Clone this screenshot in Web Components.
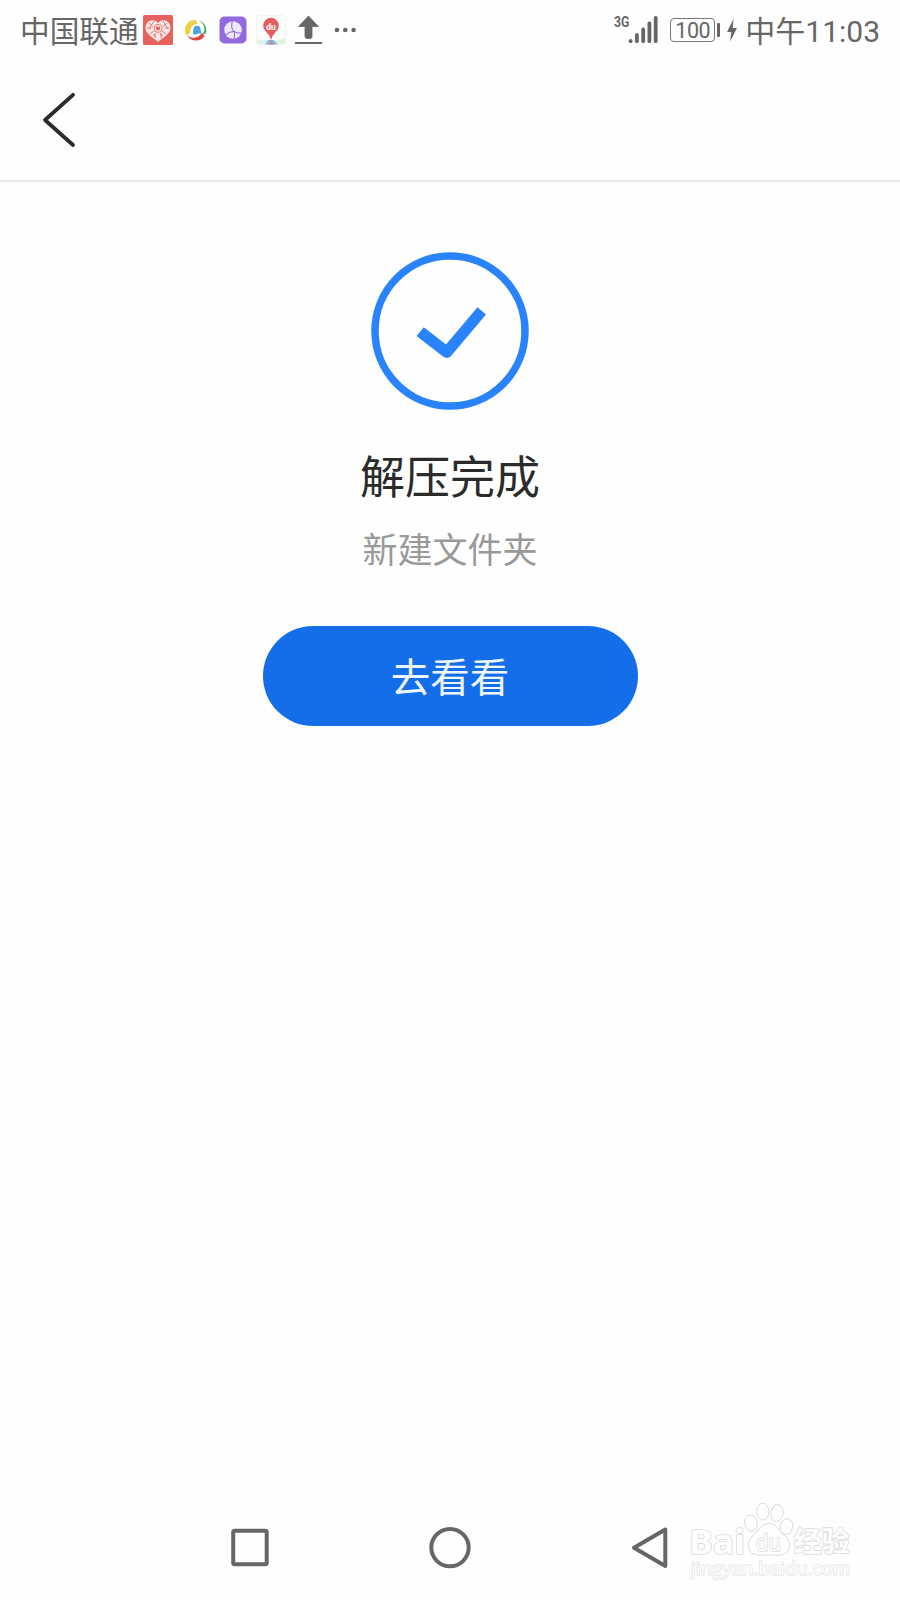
<!DOCTYPE html>
<html lang="zh-CN">
<head>
<meta charset="utf-8">
<title>解压完成</title>
<style>
	html, body {
		margin: 0;
		background: #fefefe;
	}
	body {
		font-family: Roboto, "Noto Sans CJK SC", sans-serif;
	}
</style>
</head>
<body>
<phone-screen>
	<status-bar slot="status" carrier="中国联通" network="3G" battery="100" time="中午11:03"></status-bar>
	<title-bar slot="header"></title-bar>
	<result-panel>
		<span slot="title">解压完成</span>
		<span slot="detail">新建文件夹</span>
		<pill-button slot="action">去看看</pill-button>
	</result-panel>
	<nav-bar slot="nav"></nav-bar>
	<site-mark slot="mark"></site-mark>
</phone-screen>

<script>
class PhoneScreen extends HTMLElement {
	constructor() {
		super();
		this.attachShadow({mode: 'open'}).innerHTML = `
		<style>
			:host {
				display: flex;
				flex-direction: column;
				position: relative;
				width: 900px;
				height: 1600px;
				overflow: hidden;
				background: #fefefe;
			}
			main {
				flex: 1;
			}
		</style>
		<slot name="status"></slot>
		<slot name="header"></slot>
		<main><slot></slot></main>
		<slot name="nav"></slot>
		<slot name="mark"></slot>
		`;
	}
}

class AppBadge extends HTMLElement {
	static icons = {
		heart: `
			<rect width="30" height="30" rx="1.5" fill="#e5625d"/>
			<path d="M15 8.2C12.5 3.2 2.5 4 2.5 13C2.5 19 10 22.5 15 26.8C20 22.5 27.5 19 27.5 13C27.5 4 17.5 3.2 15 8.2Z" fill="#fbe6e3"/>
			<g stroke="#e5625d" stroke-width=".8" fill="none">
				<path d="M6 8l4 4M11 6l-5 8M4 13h4M20 6l5 8M24 8l-4 4M22 13h4M7 19l4-3M12 18v5M18 18v5M23 19l-4-3M10 20h3M17 20h3"/>
				<circle cx="15" cy="13.4" r="4"/>
			</g>
			<path d="M13 11.8h4v2.2l-2 1.8l-2-1.8z" fill="#e5625d"/>`,
		browser: `
			<path d="M5.7 20.5A10 10 0 0 1 14.5 5L16.5 8.5A8 8 0 0 0 9.3 17.8Z" fill="#f1cf45"/>
			<path d="M14.5 5A10.3 10.3 0 0 1 24.8 18.5L21.5 19.5A9 9 0 0 0 14.5 5Z" fill="#3eae62"/>
			<path d="M5.7 19.8A10.3 10.3 0 0 0 23.5 21L21 17.8A9.5 9.5 0 0 1 5.7 19.8Z" fill="#dc4545"/>
			<path d="M12 18.8C11.8 16.6 12.4 16 12.5 14.3A3.5 3.5 0 0 1 19.5 14.3C19.5 16 20.8 17 20 18.2C19 19.4 17.4 18 16 19C14.7 19.8 13.2 19.8 12 18.8Z" fill="#4aa5dc"/>`,
		globe: `
			<rect x="1.5" y="1.5" width="27" height="27" rx="5" fill="#9269df"/>
			<circle cx="15" cy="15" r="8.8" fill="#efe7fb"/>
			<path d="M14.2 6.5Q12.5 14 16.2 16.5Q19 18.5 23 18M16.2 16.5Q12 16 7.8 20M16.2 16.5Q17 20 16 23.5" fill="none" stroke="#8661cf" stroke-width="1"/>`,
		pin: `
			<rect x=".5" y=".5" width="29" height="29" rx="3" fill="#fdfdfc" stroke="#f4f1ee"/>
			<path d="M1 24l8 2l-2 3H1zM20 26l9-3v6h-7z" fill="#e3f1df"/>
			<path d="M2 29l6-4l4 0l-3 4z" fill="#dceff8"/>
			<path d="M12 25h6l4 4.5H9z" fill="#7ebfe4"/>
			<path d="M15 25l4 4.5h-6z" fill="#d98286"/>
			<path d="M15 25Q13.8 20.5 9.7 16.3A7.8 7.8 0 1 1 20.3 16.3Q16.2 20.5 15 25Z" fill="#e85c60"/>
			<text x="15" y="14.5" text-anchor="middle" font-size="8.5" font-weight="700" fill="#fff">du</text>`
	};

	constructor() {
		super();
		this.attachShadow({mode: 'open'});
	}

	connectedCallback() {
		this.shadowRoot.innerHTML = `
		<style>
			:host, svg {
				display: block;
				width: 30px;
				height: 30px;
			}
		</style>
		<svg viewBox="0 0 30 30">${AppBadge.icons[this.getAttribute('icon')] || ''}</svg>
		`;
	}
}

class StatusBar extends HTMLElement {
	constructor() {
		super();
		this.attachShadow({mode: 'open'});
	}

	connectedCallback() {
		const carrier = this.getAttribute('carrier');
		const network = this.getAttribute('network');
		const battery = this.getAttribute('battery');
		const time = this.getAttribute('time');
		this.shadowRoot.innerHTML = `
		<style>
			:host {
				display: flex;
				justify-content: space-between;
				box-sizing: border-box;
				height: 60px;
				padding: 0 20px 0 20px;
				color: #666;
				white-space: nowrap;
			}
			.left, .right, .badges {
				display: flex;
				align-items: center;
				height: 60px;
			}
			.carrier, .time {
				padding-top: 3px;
				line-height: 60px;
			}
			.carrier {
				width: 123px;
				font-size: 29.7px;
			}
			.badges {
				gap: 7.6px;
			}
			svg {
				display: block;
			}
			.upload {
				margin-left: 7px;
			}
			.more {
				margin-left: 11.5px;
			}
			.network {
				align-self: flex-start;
				width: 14px;
				height: 44px;
				font: 700 15px/45px Roboto, sans-serif;
			}
			.network span {
				display: block;
				transform: scaleX(.82);
				transform-origin: left;
			}
			.battery {
				box-sizing: border-box;
				width: 45px;
				height: 24px;
				margin-left: 12.5px;
				border: 1.5px solid #777;
				border-radius: 4px;
				font-size: 21.5px;
				line-height: 23px;
				text-align: center;
				letter-spacing: -.4px;
			}
			.nub {
				width: 3px;
				height: 14px;
				margin-left: 2px;
				border-radius: 1px;
				background: #666;
			}
			.bolt {
				margin: 0 8px 0 7px;
			}
			.time {
				font-size: 30px;
			}
		</style>
		<div class="left">
			<span class="carrier">${carrier}</span>
			<div class="badges">
				<app-badge icon="heart"></app-badge>
				<app-badge icon="browser"></app-badge>
				<app-badge icon="globe"></app-badge>
				<app-badge icon="pin"></app-badge>
			</div>
			<svg class="upload" width="30" height="30" viewBox="0 0 30 30" fill="#666">
				<path d="M15.5 1L25.5 11.5H19V21.5Q19 23.5 17 23.5H14Q12 23.5 12 21.5V11.5H5.5Z" stroke="#666" stroke-width=".8" stroke-linejoin="round"/>
				<rect x="2" y="27" width="27" height="2" rx=".5"/>
			</svg>
			<svg class="more" width="24" height="8" viewBox="0 0 24 8" fill="#666">
				<circle cx="3" cy="4" r="2.3"/><circle cx="11.3" cy="4" r="2.3"/><circle cx="19.6" cy="4" r="2.3"/>
			</svg>
		</div>
		<div class="right">
			<span class="network"><span>${network}</span></span>
			<svg width="30" height="30" viewBox="0 0 30 30" stroke="#666" stroke-width="3.8" stroke-linecap="round">
				<path d="M2.6 26v.2M8.9 20v6.2M15.2 14.5v11.7M21.4 8.5v17.7M27.7 3v23.2"/>
			</svg>
			<div class="battery">${battery}</div>
			<i class="nub"></i>
			<svg class="bolt" width="10" height="24" viewBox="0 0 10 24" fill="#666">
				<path d="M6.5 1L0 14H4.3L3.2 23.5L10 10H5.7Z"/>
			</svg>
			<span class="time">${time}</span>
		</div>
		`;
	}
}

class TitleBar extends HTMLElement {
	constructor() {
		super();
		this.attachShadow({mode: 'open'}).innerHTML = `
		<style>
			:host {
				display: flex;
				align-items: center;
				box-sizing: border-box;
				height: 122px;
				padding-left: 40px;
				border-bottom: 2px solid #e8e8e8;
			}
		</style>
		<svg width="40" height="60" viewBox="0 0 40 60" fill="none" stroke="#2b2b2b" stroke-width="3.8" stroke-linecap="round" stroke-linejoin="round">
			<path d="M33 4.8L5 30L33 55"/>
		</svg>
		`;
	}
}

class ResultPanel extends HTMLElement {
	constructor() {
		super();
		this.attachShadow({mode: 'open'}).innerHTML = `
		<style>
			:host {
				display: flex;
				flex-direction: column;
				align-items: center;
				padding-top: 69px;
			}
			.title {
				margin-top: 38px;
				color: #2b2b2b;
				font-size: 45px;
				line-height: 60px;
			}
			.detail {
				margin-top: 18px;
				color: #999;
				font-size: 35px;
				line-height: 50px;
			}
			.action {
				margin-top: 49px;
			}
		</style>
		<svg width="160" height="160" viewBox="0 0 160 160">
			<circle cx="80" cy="80" r="75" fill="none" stroke="#2983fc" stroke-width="7.5"/>
			<path d="M46.5 85L53.8 76.3L76 93.5L107.5 56.3L116 63.5L81 105Q77.5 108.5 73 105.5Z" fill="#2983fc"/>
		</svg>
		<div class="title"><slot name="title"></slot></div>
		<div class="detail"><slot name="detail"></slot></div>
		<div class="action"><slot name="action"></slot></div>
		`;
	}
}

class PillButton extends HTMLElement {
	constructor() {
		super();
		this.attachShadow({mode: 'open'}).innerHTML = `
		<style>
			:host {
				display: block;
			}
			button {
				display: block;
				box-sizing: border-box;
				width: 375px;
				height: 100px;
				padding: 6px 0 0;
				border: 0;
				border-radius: 50px;
				background: #146eea;
				color: #eef6ff;
				font: inherit;
				font-size: 39.5px;
				line-height: 94px;
			}
		</style>
		<button><slot></slot></button>
		`;
	}
}

class NavBar extends HTMLElement {
	constructor() {
		super();
		this.attachShadow({mode: 'open'}).innerHTML = `
		<style>
			:host {
				display: flex;
				justify-content: center;
				align-items: center;
				gap: 156px;
				height: 105px;
			}
			svg {
				fill: none;
				stroke: #666;
				stroke-width: 4;
				stroke-linejoin: round;
			}
		</style>
		<svg width="44" height="44" viewBox="0 0 44 44"><rect x="5.2" y="4.8" width="33.5" height="33.5" rx="1.5"/></svg>
		<svg width="44" height="44" viewBox="0 0 44 44"><circle cx="22" cy="21.6" r="18.7"/></svg>
		<svg width="44" height="44" viewBox="0 0 44 44"><path d="M6 21.8L37.3 3.5V40Z"/></svg>
		`;
	}
}

class SiteMark extends HTMLElement {
	constructor() {
		super();
		//floats over the corner of the navigation bar
		this.attachShadow({mode: 'open'}).innerHTML = `
		<style>
			:host {
				display: block;
				position: absolute;
				left: 685px;
				top: 1500px;
			}
			svg {
				display: block;
				fill: #fefefe;
				stroke: #dcdcdc;
				stroke-width: 1;
			}
			text {
				paint-order: stroke;
				stroke-width: 1.7;
				stroke-linejoin: round;
			}
			.url {
				stroke: #e2e2e2;
				stroke-width: 1.4;
			}
		</style>
		<svg width="175" height="85" viewBox="0 0 175 85">
			<text x="4" y="53.5" font-family="Open Sans, sans-serif" font-weight="700" font-size="34" textLength="56" lengthAdjust="spacingAndGlyphs">Bai</text>
			<ellipse cx="66" cy="23.3" rx="6.3" ry="8.3" transform="rotate(-8 66 23.3)"/>
			<ellipse cx="77.7" cy="11.7" rx="6.2" ry="8.5"/>
			<ellipse cx="92" cy="13.2" rx="6.2" ry="8.4" transform="rotate(10 92 13.2)"/>
			<ellipse cx="101.4" cy="26.7" rx="6.2" ry="8" transform="rotate(14 101.4 26.7)"/>
			<path d="M84 23.7C76 23.7 74 30 69.5 34C65 38 62 43 64 49C67 57 76 55 84 55C92 55 101 57 104 49C106 43 103 38 98 34C93.500 30 92 23.700 84 23.700Z"/>
			<text x="71" y="50.5" font-family="Open Sans, sans-serif" font-size="23" textLength="25" lengthAdjust="spacingAndGlyphs">du</text>
			<text x="108.5" y="51.5" font-family="Noto Sans CJK SC, sans-serif" font-size="28" font-weight="700" textLength="56" lengthAdjust="spacingAndGlyphs">经验</text>
			<text class="url" x="6" y="74.5" font-family="Open Sans, sans-serif" font-size="19" textLength="159" lengthAdjust="spacingAndGlyphs">jingyan.baidu.com</text>
		</svg>
		`;
	}
}

customElements.define('app-badge', AppBadge);
customElements.define('status-bar', StatusBar);
customElements.define('title-bar', TitleBar);
customElements.define('pill-button', PillButton);
customElements.define('result-panel', ResultPanel);
customElements.define('nav-bar', NavBar);
customElements.define('site-mark', SiteMark);
customElements.define('phone-screen', PhoneScreen);
</script>
</body>
</html>
